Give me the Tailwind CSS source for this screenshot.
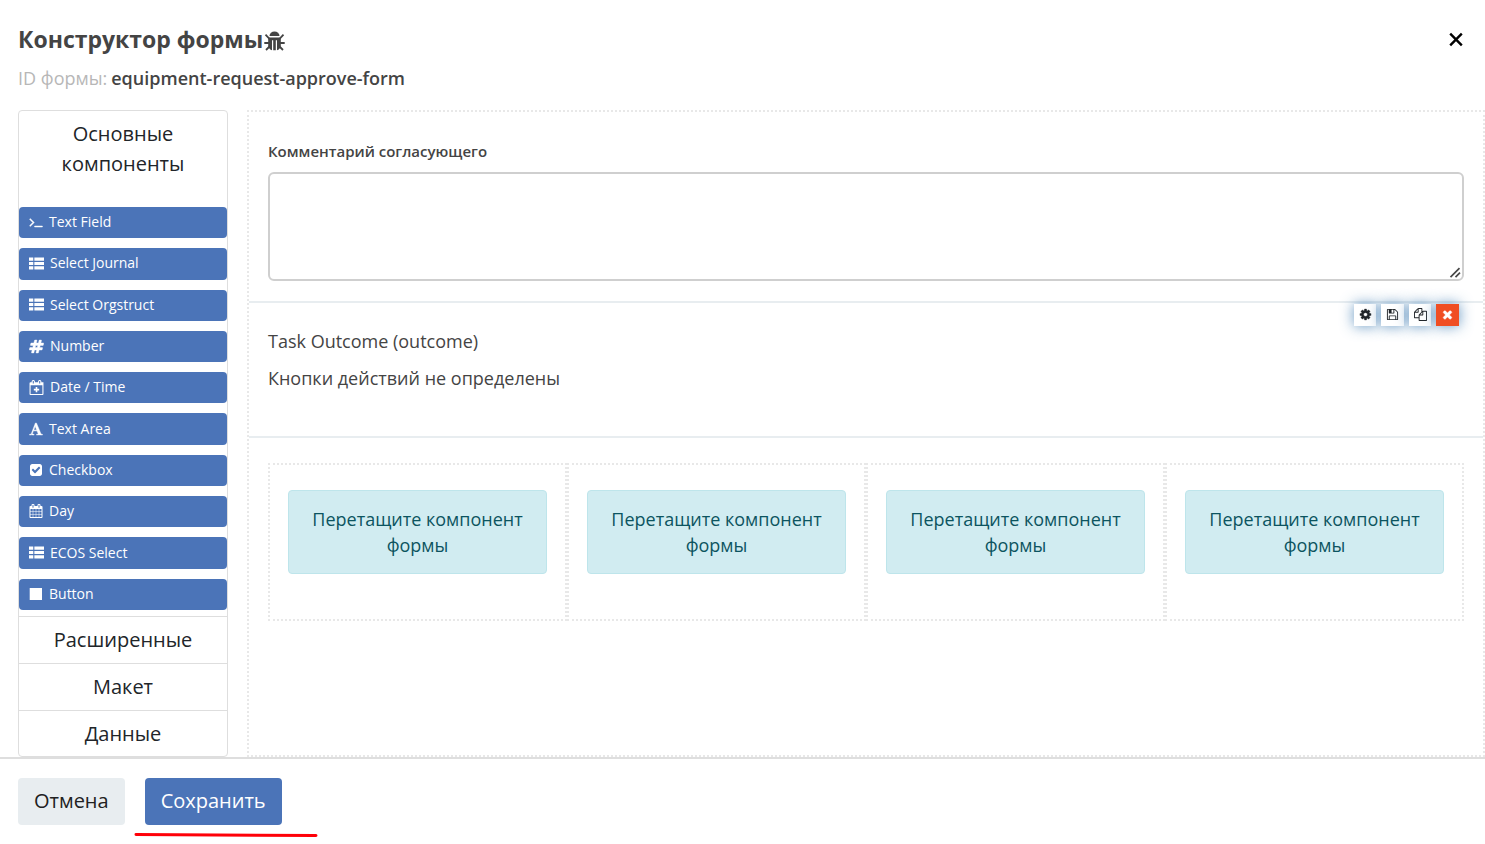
<!DOCTYPE html>
<html lang="ru">
<head>
<meta charset="utf-8">
<meta name="viewport" content="width=device-width, initial-scale=1">
<title>Конструктор формы</title>
<script src="https://cdn.jsdelivr.net/npm/@tailwindcss/browser@4"></script>
</head>
<body class="flex min-h-screen flex-col bg-white font-['Open_Sans','Noto_Sans',sans-serif] text-[#444]">
<svg class="hidden" aria-hidden="true">
  <symbol id="list" viewBox="0 0 1792 1792"><path d="M0 192h512v384H0zM640 192h1152v384H640zM0 704h512v384H0zM640 704h1152v384H640zM0 1216h512v384H0zM640 1216h1152v384H640z"/></symbol>
  <symbol id="terminal" viewBox="0 0 1792 1792"><path stroke="currentColor" stroke-width="60" d="M649 983l-466 466q-10 10-23 10t-23-10l-50-50q-10-10-10-23t10-23l393-393-393-393q-10-10-10-23t10-23l50-50q10-10 23-10t23 10l466 466q10 10 10 23t-10 23zm1079 457v64q0 14-9 23t-23 9h-960q-14 0-23-9t-9-23v-64q0-14 9-23t23-9h960q14 0 23 9t9 23z"/></symbol>
  <symbol id="hash" viewBox="0 0 1792 1792"><path stroke="currentColor" stroke-width="50" d="M991 1024l64-256h-254l-64 256h254zm768-504l-56 224q-7 24-31 24h-327l-64 256h311q15 0 25 12 10 14 6 28l-56 224q-5 24-31 24h-327l-81 328q-7 24-31 24h-224q-16 0-26-12-9-12-6-28l78-312h-254l-81 328q-7 24-31 24h-225q-15 0-25-12-9-12-6-28l78-312h-311q-15 0-25-12-9-12-6-28l56-224q7-24 31-24h327l64-256h-311q-15 0-25-12-10-14-6-28l56-224q5-24 31-24h327l81-328q7-24 32-24h224q15 0 25 12 9 12 6 28l-78 312h254l81-328q7-24 32-24h224q15 0 25 12 9 12 6 28l-78 312h311q15 0 25 12 9 12 6 28z"/></symbol>
  <symbol id="calplus" viewBox="0 0 1792 1792"><path fill-rule="evenodd" d="M1728 256v1408q0 52-38 90t-90 38h-1408q-52 0-90-38t-38-90v-1280q0-52 38-90t90-38h128v-96q0-66 47-113t113-47h64q66 0 113 47t47 113v96h384v-96q0-66 47-113t113-47h64q66 0 113 47t47 113v96h128zM192 640v1024h1408v-1024zM448 128v288h128v-288zM1216 128v288h128v-288zM800 832h192v224h224v192h-224v224h-192v-224h-224v-192h224z"/></symbol>
  <symbol id="font" viewBox="0 0 1792 1792"><path stroke="currentColor" stroke-width="60" d="M789 559l-170 450q33 0 136.500 2t160.500 2q19 0 57-2-87-253-184-452zm-725 1105l2-79q23-7 56-12.500t57-10.500 49.500-14.500 44.500-29 31-50.500l237-616 280-724h128q8 14 11 21l205 480q33 78 106 257.500t114 274.500q15 34 58 144.500t72 168.500q20 45 35 57 19 15 88 29.500t84 20.500q6 38 6 57 0 5-.5 13.500t-.5 12.500q-63 0-190-8t-191-8q-76 0-215 7t-178 8q0-43 4-78l131-28q1 0 12.500-2.500t15.500-3.500 14.500-4.500 15-6.500 11-8 9-11 2.500-14q0-16-31-96.500t-72-177.500-42-100l-450-2q-26 58-76.500 195.500t-50.500 162.500q0 22 14 37.500t43.500 24.500 48.500 13.500 57 8.500 41 4q1 19 1 58 0 9-2 27-58 0-174.500-10t-174.500-10q-8 0-26.500 4t-21.500 4q-80 14-188 14z"/></symbol>
  <symbol id="check" viewBox="0 0 1792 1792"><path d="M813 1299l614-614q19-19 19-45t-19-45l-102-102q-19-19-45-19t-45 19l-467 467-211-211q-19-19-45-19t-45 19l-102 102q-19 19-19 45t19 45l358 358q19 19 45 19t45-19zm851-883v960q0 119-84.500 203.500t-203.500 84.500h-960q-119 0-203.500-84.500t-84.500-203.500v-960q0-119 84.500-203.500t203.500-84.500h960q119 0 203.500 84.500t84.500 203.500z"/></symbol>
  <symbol id="calendar" viewBox="0 0 1792 1792"><path d="M192 1664h288v-288h-288v288zm352 0h320v-288h-320v288zm-352-352h288v-320h-288v320zm352 0h320v-320h-320v320zm-352-384h288v-288h-288v288zm736 736h320v-288h-320v288zm-384-736h320v-288h-320v288zm768 736h288v-288h-288v288zm-384-352h320v-320h-320v320zm-352-864v-288q0-13-9.500-22.500t-22.500-9.500h-64q-13 0-22.500 9.500t-9.500 22.500v288q0 13 9.500 22.500t22.500 9.500h64q13 0 22.500-9.500t9.500-22.500zm736 864h288v-320h-288v320zm-384-384h320v-288h-320v288zm384 0h288v-288h-288v288zm32-480v-288q0-13-9.500-22.500t-22.500-9.500h-64q-13 0-22.500 9.500t-9.500 22.500v288q0 13 9.500 22.500t22.500 9.500h64q13 0 22.500-9.500t9.500-22.500zm384-64v1280q0 52-38 90t-90 38h-1408q-52 0-90-38t-38-90v-1280q0-52 38-90t90-38h128v-96q0-66 47-113t113-47h64q66 0 113 47t47 113v96h384v-96q0-66 47-113t113-47h64q66 0 113 47t47 113v96h128q52 0 90 38t38 90z"/></symbol>
  <symbol id="square" viewBox="0 0 1792 1792"><path d="M90 130h1574v1532H90z"/></symbol>
</svg>

<header class="flex items-start justify-between px-[18px] pt-[23px]">
  <div>
    <h1 class="flex items-center gap-px text-[23px] leading-8 font-bold">Конструктор формы
      <svg class="mt-1 h-5 w-[21px]" viewBox="0 0 21 20" fill="none" stroke="currentColor" stroke-width="1.800" aria-hidden="true">
        <path d="M5.500 5a5 4.600 0 0 1 10 0z" fill="currentColor" stroke="none"/>
        <path d="M4.200 6.400h12.600v8.600q-.8 3.600-3.800 4.300v-10h-1.200v10h-2.600v-10h-1.200v10q-3-.7-3.800-4.300z" fill="currentColor" stroke="none"/>
        <path d="M1.500 3.600l4 4.200M19.500 3.600l-4 4.200M.3 12h5M20.700 12h-5M2 19l4-4M19 19l-4-4"/>
      </svg>
    </h1>
    <p class="mt-[11px] flex gap-1 text-lg leading-6"><span class="text-[#b7b7b7]">ID формы:</span><span class="font-semibold">equipment-request-approve-form</span></p>
  </div>
  <button type="button" aria-label="Закрыть" class="mt-2 mr-[3px] text-black">
    <svg class="size-4" viewBox="0 0 16 16" fill="none" stroke="currentColor" stroke-width="2.400"><path d="M2.200 2.700l11.600 11.600M13.800 2.700l-11.600 11.600"/></svg>
  </button>
</header>

<main class="mt-5 flex flex-1 gap-[19px] pl-[18px]">
  <aside class="flex w-[210px] shrink-0 flex-col rounded border border-[#dedede] text-[#212529]">
    <h2><button type="button" class="w-full px-8 pt-2 pb-7 text-xl leading-[30px]">Основные компоненты</button></h2>
    <div class="grid flex-1 auto-rows-fr gap-2.5 pb-1.5 text-sm leading-5 text-white">
      <button type="button" class="flex items-center gap-1.5 rounded bg-[#4b74b8] px-2.5 pb-px"><svg class="size-[14px] fill-current"><use href="#terminal"/></svg>Text Field</button>
      <button type="button" class="flex items-center gap-1.5 rounded bg-[#4b74b8] px-2.5 pb-px"><svg class="size-[15px] fill-current"><use href="#list"/></svg>Select Journal</button>
      <button type="button" class="flex items-center gap-1.5 rounded bg-[#4b74b8] px-2.5 pb-px"><svg class="size-[15px] fill-current"><use href="#list"/></svg>Select Orgstruct</button>
      <button type="button" class="flex items-center gap-1.5 rounded bg-[#4b74b8] px-2.5 pb-px"><svg class="size-[15px] fill-current"><use href="#hash"/></svg>Number</button>
      <button type="button" class="flex items-center gap-1.5 rounded bg-[#4b74b8] px-2.5 pb-px"><svg class="size-[15px] fill-current"><use href="#calplus"/></svg>Date / Time</button>
      <button type="button" class="flex items-center gap-1.5 rounded bg-[#4b74b8] px-2.5 pb-px"><svg class="size-[14px] fill-current"><use href="#font"/></svg>Text Area</button>
      <button type="button" class="flex items-center gap-1.5 rounded bg-[#4b74b8] px-2.5 pb-px"><svg class="size-[14px] fill-current"><use href="#check"/></svg>Checkbox</button>
      <button type="button" class="flex items-center gap-1.5 rounded bg-[#4b74b8] px-2.5 pb-px"><svg class="size-[14px] fill-current"><use href="#calendar"/></svg>Day</button>
      <button type="button" class="flex items-center gap-1.5 rounded bg-[#4b74b8] px-2.5 pb-px"><svg class="size-[15px] fill-current"><use href="#list"/></svg>ECOS Select</button>
      <button type="button" class="flex items-center gap-1.5 rounded bg-[#4b74b8] px-2.5 pb-px"><svg class="size-[14px] fill-current"><use href="#square"/></svg>Button</button>
    </div>
    <h2><button type="button" class="w-full border-t border-[#dedede] py-2 text-xl leading-[30px]">Расширенные</button></h2>
    <h2><button type="button" class="w-full border-t border-[#dedede] py-2 text-xl leading-[30px]">Макет</button></h2>
    <h2><button type="button" class="w-full border-t border-[#dedede] pt-2 pb-[7px] text-xl leading-[30px]">Данные</button></h2>
  </aside>

  <section class="flex min-w-0 flex-1 flex-col border-2 border-dotted border-[#e8e8e8]">
    <div class="border-b-2 border-[#e8edf0] px-[19px] pt-[27px] pb-5">
      <label for="comment" class="block text-[15px] leading-6 font-semibold">Комментарий согласующего</label>
      <div class="relative mt-[9px]">
        <textarea id="comment" class="block h-[109px] w-full resize-none rounded-md border-2 border-[#cfcfcf] bg-white p-2 text-lg outline-none"></textarea>
        <svg class="pointer-events-none absolute right-[3px] bottom-[3px] h-[11px] w-3" viewBox="0 0 12 11" fill="none" stroke="#484848" stroke-width="1.700" aria-hidden="true"><path d="M1.500 10.200L10.500 1.200M6.500 10.200L11 5.700"/></svg>
      </div>
    </div>
    <div class="relative border-b-2 border-[#e8edf0] px-[19px] pt-[25px] pb-11 text-lg leading-[27px]">
      <p>Task Outcome (outcome)</p>
      <p class="mt-2.5">Кнопки действий не определены</p>
      <div class="absolute top-px right-6 flex gap-[5px] text-[#212529]">
        <button type="button" aria-label="Настройки" class="grid h-[22px] w-[22px] place-items-center bg-white pb-px shadow-[0_0_14px_#4883b6d9]"><svg class="size-[13px] fill-current" viewBox="0 0 1792 1792"><path stroke="currentColor" stroke-width="40" d="M1152 896q0-106-75-181t-181-75-181 75-75 181 75 181 181 75 181-75 75-181zm512-109v222q0 12-8 23t-20 13l-185 28q-19 54-39 91 35 50 107 138 10 12 10 25t-9 23q-27 37-99 108t-94 71q-12 0-26-9l-138-108q-44 23-91 38-16 136-29 186-7 28-36 28h-222q-14 0-24.500-8.500t-11.500-21.500l-28-184q-49-16-90-37l-141 107q-10 9-25 9-14 0-25-11-126-114-165-168-7-10-7-23 0-12 8-23 15-21 51-66.500t54-70.500q-27-50-41-99l-183-27q-13-2-21-12.500t-8-23.500v-222q0-12 8-23t19-13l186-28q14-46 39-92-40-57-107-138-10-12-10-24 0-10 9-23 26-36 98.500-107.500t94.500-71.500q13 0 26 10l138 107q44-23 91-38 16-136 29-186 7-28 36-28h222q14 0 24.500 8.500t11.500 21.500l28 184q49 16 90 37l142-107q9-9 24-9 13 0 25 10 129 119 165 170 7 8 7 22 0 12-8 23-15 21-51 66.500t-54 70.500q26 50 41 98l183 28q13 2 21 12.500t8 23.500z"/></svg></button>
        <button type="button" aria-label="Сохранить компонент" class="grid h-[22px] w-[23px] place-items-center bg-white pb-px shadow-[0_0_14px_#4883b6d9]"><svg class="size-[13px] fill-current" viewBox="0 0 1792 1792"><path d="M512 1536h768v-384h-768v384zm896 0h128v-896q0-14-10-38.500t-20-34.500l-281-281q-10-10-34-20t-39-10v416q0 40-28 68t-68 28h-576q-40 0-68-28t-28-68v-416h-128v1280h128v-416q0-40 28-68t68-28h832q40 0 68 28t28 68v416zm-384-928v-320q0-13-9.500-22.500t-22.500-9.500h-192q-13 0-22.500 9.500t-9.500 22.500v320q0 13 9.500 22.500t22.500 9.500h192q13 0 22.500-9.500t9.500-22.500zm640 32v928q0 40-28 68t-68 28h-1344q-40 0-68-28t-28-68v-1344q0-40 28-68t68-28h928q40 0 88 20t76 48l280 280q28 28 48 76t20 88z"/></svg></button>
        <button type="button" aria-label="Копировать" class="grid h-[22px] w-[22px] place-items-center bg-white pb-px shadow-[0_0_14px_#4883b6d9]"><svg class="size-[13px] fill-current" viewBox="0 0 1792 1792"><path d="M1696 384q40 0 68 28t28 68v1216q0 40-28 68t-68 28h-960q-40 0-68-28t-28-68v-288h-544q-40 0-68-28t-28-68v-672q0-40 20-88t48-76l408-408q28-28 76-48t88-20h416q40 0 68 28t28 68v328q68-40 128-40h416zm-544 213l-299 299h299v-299zm-640-384l-299 299h299v-299zm196 647l316-316v-416h-384v416q0 40-28 68t-68 28h-416v640h512v-256q0-40 20-88t48-76zm956 804v-1152h-384v416q0 40-28 68t-68 28h-416v640h896z"/></svg></button>
        <button type="button" aria-label="Удалить" class="grid h-[22px] w-[23px] place-items-center bg-[#f04e23] pb-px text-white shadow-[0_0_14px_#4883b6d9]"><svg class="size-[13px] fill-current" viewBox="0 0 1792 1792"><path stroke="currentColor" stroke-width="50" d="M1490 1322q0 40-28 68l-136 136q-28 28-68 28t-68-28l-294-294-294 294q-28 28-68 28t-68-28l-136-136q-28-28-28-68t28-68l294-294-294-294q-28-28-28-68t28-68l136-136q28-28 68-28t68 28l294 294 294-294q28-28 68-28t68 28l136 136q28 28 28 68t-28 68l-294 294 294 294q28 28 28 68z"/></svg></button>
      </div>
    </div>
    <div class="mx-[19px] mt-[25px] grid grid-cols-4 text-center text-lg leading-[26px] text-[#0c5460]">
      <div class="border-2 border-dotted border-[#e8e8e8] px-[18px] pt-[25px] pb-[45px]"><p class="rounded border border-[#bee5eb] bg-[#d1ecf1] px-5 py-[15px]">Перетащите компонент формы</p></div>
      <div class="border-2 border-dotted border-[#e8e8e8] px-[18px] pt-[25px] pb-[45px]"><p class="rounded border border-[#bee5eb] bg-[#d1ecf1] px-5 py-[15px]">Перетащите компонент формы</p></div>
      <div class="border-2 border-dotted border-[#e8e8e8] px-[18px] pt-[25px] pb-[45px]"><p class="rounded border border-[#bee5eb] bg-[#d1ecf1] px-5 py-[15px]">Перетащите компонент формы</p></div>
      <div class="border-2 border-dotted border-[#e8e8e8] px-[18px] pt-[25px] pb-[45px]"><p class="rounded border border-[#bee5eb] bg-[#d1ecf1] px-5 py-[15px]">Перетащите компонент формы</p></div>
    </div>
  </section>
</main>

<footer class="flex gap-5 border-t-2 border-[#dedede] px-[18px] pt-[19px] pb-[19px] text-xl leading-[30px]">
  <button type="button" class="rounded bg-[#e8edf0] px-4 pt-2 pb-[9px] text-[#212121]">Отмена</button>
  <div class="relative">
    <button type="button" class="rounded bg-[#4b74b8] px-4 pt-2 pb-[9px] text-white">Сохранить</button>
    <svg class="absolute top-[54px] -left-[11px] h-1.5 w-[184px]" viewBox="0 0 184 6" fill="none" stroke="#ff0008" stroke-width="3" stroke-linecap="round" aria-hidden="true"><path d="M2 2.500L182 3.500"/></svg>
  </div>
</footer>
</body>
</html>
